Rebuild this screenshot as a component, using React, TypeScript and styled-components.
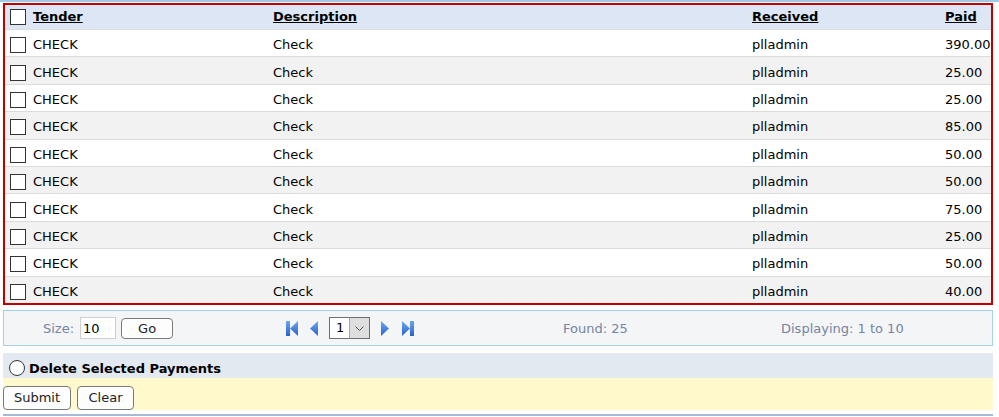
import React from "react";
import styled, { createGlobalStyle } from "styled-components";

const Global = createGlobalStyle`
  html, body { margin: 0; padding: 0; background: #fff; }
  body { font-family: "DejaVu Sans", Verdana, sans-serif; font-size: 13px; color: #000; }
  * { box-sizing: border-box; }
`;

const Page = styled.div`
  width: 999px;
  height: 417px;
  overflow: hidden;
  border-top: 2px solid #9fcbe7;
  padding: 1px 6px 0 3px;
`;

const Grid = styled.div`
  border: 2px solid #c00000;
`;

const cols = "25px 240px 479px 193px 1fr";

const HeadRow = styled.div`
  display: grid;
  grid-template-columns: ${cols};
  height: 24px;
  align-items: center;
  background: #dce6f4;
`;

const Row = styled.div<{ $alt: boolean }>`
  display: grid;
  grid-template-columns: ${cols};
  height: 27.4px;
  padding-top: 4px;
  align-items: center;
  background: ${(p) => (p.$alt ? "#f2f2f2" : "#ffffff")};
  border-top: 1px solid #dcdcdc;
  &:first-of-type { border-top: none; }
`;

const Cell = styled.div`
  padding-left: 3px;
  white-space: nowrap;
  line-height: 16px;
`;

const BoxCell = styled.div`
  padding-left: 5px;
  display: flex;
  align-items: center;
`;

const Check = styled.input.attrs({ type: "checkbox" })`
  appearance: none;
  margin: 0;
  width: 16px;
  height: 16px;
  border: 1px solid #333;
  background: #fff;
`;

const HeadLink = styled.a`
  font-weight: bold;
  color: #000;
  text-decoration: underline;
  cursor: pointer;
`;

const Pager = styled.div`
  margin-top: 5px;
  height: 36px;
  border: 1px solid #a6d0ea;
  background: #f4f5f7;
  display: grid;
  grid-template-columns: 282px 277px 218px 1fr;
  align-items: center;
  color: #7484a3;
  padding-top: 1px;
`;

const PagerCell = styled.div<{ $pad?: number }>`
  display: flex;
  align-items: center;
  padding-left: ${(p) => p.$pad ?? 0}px;
  white-space: nowrap;
`;

const SizeLabel = styled.span`
  margin-right: 6px;
`;

const SizeInput = styled.input`
  width: 36px;
  height: 22px;
  border: 1px solid #cfcfcf;
  background: #fff;
  font: inherit;
  color: #000;
  padding: 0 2px;
  margin: 0 5px 0 0;
`;

const Btn = styled.button<{ $w: number; $h: number }>`
  width: ${(p) => p.$w}px;
  height: ${(p) => p.$h}px;
  border: 1px solid #7a7a7a;
  border-radius: 4px;
  background: #fdfdfd;
  font: inherit;
  color: #222;
  padding: 0;
  margin: 0;
`;

const NavIcon = styled.svg`
  display: block;
`;

const Select = styled.div`
  display: flex;
  width: 41px;
  height: 22px;
  border: 1px solid #6f6f6f;
  margin: 0 11px 0 10px;
  background: #fff;
`;

const SelectValue = styled.span`
  flex: 1;
  color: #000;
  padding-left: 6px;
  line-height: 20px;
`;

const SelectArrow = styled.span`
  width: 20px;
  background: #dedede;
  border-left: 1px solid #aaa;
  display: flex;
  align-items: center;
  justify-content: center;
`;

const ActionBar = styled.div`
  margin-top: 7px;
  height: 25px;
  background: #e3e9f1;
  display: flex;
  align-items: flex-end;
  padding: 0 0 1px 6px;
`;

const Radio = styled.input.attrs({ type: "radio" })`
  appearance: none;
  margin: 0 4px 1px 0;
  width: 16px;
  height: 16px;
  border: 1px solid #333;
  border-radius: 50%;
  background: #fff;
`;

const ActionLabel = styled.span`
  font-weight: bold;
  color: #000;
  line-height: 17px;
`;

const ButtonBar = styled.div`
  height: 32px;
  background: #fff9cc;
  display: flex;
  align-items: flex-end;
  gap: 6px;
`;

const BottomRule = styled.div`
  margin-top: 4px;
  border-top: 2px solid #a7bbd8;
`;

const payments = ["390.00", "25.00", "25.00", "85.00", "50.00", "50.00", "75.00", "25.00", "50.00", "40.00"];

const grad = (
  <defs>
    <linearGradient id="nb" x1="0" y1="0" x2="0" y2="1">
      <stop offset="0" stopColor="#6aa6f0" />
      <stop offset="1" stopColor="#2a63c9" />
    </linearGradient>
  </defs>
);

export default function App() {
  return (
    <>
      <Global />
      <Page>
        <Grid>
          <HeadRow>
            <BoxCell><Check /></BoxCell>
            <Cell><HeadLink>Tender</HeadLink></Cell>
            <Cell><HeadLink>Description</HeadLink></Cell>
            <Cell><HeadLink>Received</HeadLink></Cell>
            <Cell><HeadLink>Paid</HeadLink></Cell>
          </HeadRow>
          {payments.map((p, i) => (
            <Row key={i} $alt={i % 2 === 1}>
              <BoxCell><Check /></BoxCell>
              <Cell>CHECK</Cell>
              <Cell>Check</Cell>
              <Cell>plladmin</Cell>
              <Cell>{p}</Cell>
            </Row>
          ))}
        </Grid>
        <Pager>
          <PagerCell $pad={39}>
            <SizeLabel>Size:</SizeLabel>
            <SizeInput defaultValue="10" />
            <Btn $w={52} $h={21}>Go</Btn>
          </PagerCell>
          <PagerCell>
            <NavIcon width="13" height="15" viewBox="0 0 13 15">
              {grad}
              <rect x="0" y="0" width="4" height="15" fill="url(#nb)" />
              <polygon points="12,0 12,15 4,7.5" fill="url(#nb)" />
            </NavIcon>
            <NavIcon width="9" height="15" viewBox="0 0 9 15" style={{ marginLeft: 11 }}>
              <polygon points="8,0 8,15 0,7.5" fill="url(#nb)" />
            </NavIcon>
            <Select>
              <SelectValue>1</SelectValue>
              <SelectArrow>
                <svg width="9" height="5" viewBox="0 0 9 5">
                  <polyline points="0.5,0.5 4.5,4.5 8.5,0.5" fill="none" stroke="#555" strokeWidth="1" />
                </svg>
              </SelectArrow>
            </Select>
            <NavIcon width="9" height="15" viewBox="0 0 9 15">
              <polygon points="0,0 0,15 8,7.5" fill="url(#nb)" />
            </NavIcon>
            <NavIcon width="13" height="15" viewBox="0 0 13 15" style={{ marginLeft: 12 }}>
              <polygon points="0,0 0,15 8,7.5" fill="url(#nb)" />
              <rect x="8" y="0" width="4" height="15" fill="url(#nb)" />
            </NavIcon>
          </PagerCell>
          <PagerCell>Found: 25</PagerCell>
          <PagerCell>Displaying: 1 to 10</PagerCell>
        </Pager>
        <ActionBar>
          <Radio name="act" />
          <ActionLabel>Delete Selected Payments</ActionLabel>
        </ActionBar>
        <ButtonBar>
          <Btn $w={68} $h={24}>Submit</Btn>
          <Btn $w={57} $h={24}>Clear</Btn>
        </ButtonBar>
        <BottomRule />
      </Page>
    </>
  );
}
